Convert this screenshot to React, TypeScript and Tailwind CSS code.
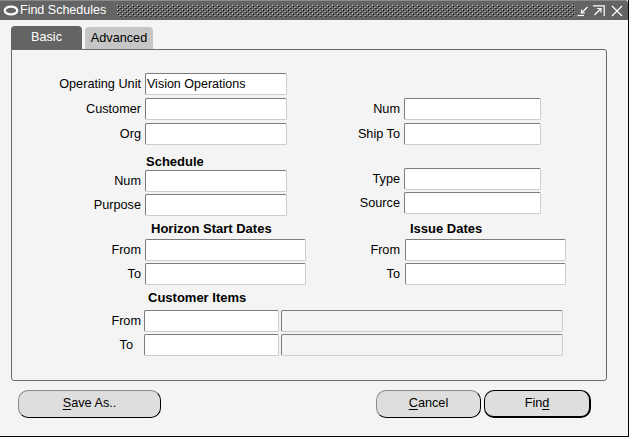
import type { ReactNode } from "react";

// Oracle Forms style "Find Schedules" dialog.

function Field({ w, value, disabled }: { w: string; value?: string; disabled?: boolean }) {
  return (
    <div
      className={`${w} flex h-[22px] items-center rounded-[2px] border border-t-[#7c7c7c] border-l-[#7c7c7c] border-b-[#cdcdcd] border-r-[#cdcdcd] px-[1px] text-[12.5px] leading-none whitespace-nowrap text-black ${
        disabled ? "bg-[#f4f4f4]" : "bg-white"
      }`}
    >
      {value}
    </div>
  );
}

function Label({ w, children, extra }: { w: string; children: ReactNode; extra?: string }) {
  return (
    <span className={`${w} shrink-0 text-right text-[12.7px] leading-none whitespace-nowrap text-black ${extra ?? ""}`}>{children}</span>
  );
}

function Row({ left, right, mt, rightShift }: { left?: ReactNode; right?: ReactNode; mt: string; rightShift?: boolean }) {
  return (
    <div className={`flex items-start ${mt}`}>
      <div className="flex w-[318px] shrink-0 items-center">{left}</div>
      {right ? <div className={`flex items-center ${rightShift ? "-mt-[2px]" : ""}`}>{right}</div> : null}
    </div>
  );
}

function Heading({ children, pl }: { children: ReactNode; pl: string }) {
  return <span className={`block ${pl} text-[13px] font-bold leading-[15px] whitespace-nowrap text-black`}>{children}</span>;
}

function TitleIcons() {
  return (
    <div className="flex items-center gap-[4px] text-white">
      <svg width="12" height="12" viewBox="0 0 12 12" fill="none" stroke="currentColor" strokeWidth="1.2">
        <line x1="0.5" y1="10.5" x2="7" y2="10.5" />
        <line x1="10.5" y1="2" x2="4.5" y2="8" />
        <polyline points="4.5,4.5 4.5,8 8,8" />
      </svg>
      <svg width="12" height="12" viewBox="0 0 12 12" fill="none" stroke="currentColor" strokeWidth="1.2">
        <polyline points="0,0.8 11.2,0.8 11.2,11" />
        <line x1="1.5" y1="10" x2="8" y2="3.5" />
        <polyline points="4,3.5 8,3.5 8,7.5" />
      </svg>
      <svg width="16" height="12" viewBox="0 0 16 12" fill="none" stroke="currentColor" strokeWidth="1.3">
        <line x1="3" y1="1" x2="13" y2="11" />
        <line x1="13" y1="1" x2="3" y2="11" />
      </svg>
    </div>
  );
}

export default function App() {
  return (
    <div className="h-[438px] w-[630px] bg-white font-['Liberation_Sans',Arial,sans-serif]">
      <div className="flex h-[437px] w-[629px] flex-col border-r border-b border-black bg-[#f4f4f4]">
        {/* Title bar */}
        <div className="flex h-[20px] shrink-0 items-center rounded-tr-[3px] border-t border-[#8a8a8a] bg-[#646464] pr-[3px]">
          <svg width="16" height="11" viewBox="0 0 16 11" className="ml-[3px] shrink-0">
            <ellipse cx="8" cy="5.5" rx="6.3" ry="3.9" fill="none" stroke="white" strokeWidth="2.2" />
          </svg>
          <span className="ml-[1px] shrink-0 whitespace-nowrap text-[12.5px] leading-none text-white">Find Schedules</span>
          <svg width="458" height="12" className="ml-[11px] shrink-0">
            <defs>
              <pattern id="dots" width="5" height="4" patternUnits="userSpaceOnUse">
                <rect x="0" y="0" width="1" height="1" fill="#d0d0d0" />
                <rect x="1" y="1" width="1" height="1" fill="#000" />
                <rect x="2.5" y="2" width="1" height="1" fill="#d0d0d0" />
                <rect x="3.5" y="3" width="1" height="1" fill="#000" />
              </pattern>
            </defs>
            <rect width="458" height="12" fill="url(#dots)" />
          </svg>
          <div className="ml-auto shrink-0">
            <TitleIcons />
          </div>
        </div>

        {/* Body */}
        <div className="flex flex-col pt-[6px]">
          {/* Tabs */}
          <div className="flex h-[23px] items-end gap-[3px] pl-[11px]">
            <div className="flex h-[23px] w-[71px] items-center justify-center rounded-t-[4px] bg-[#646464] text-[12.7px] leading-none text-white">
              Basic
            </div>
            <div className="flex h-[22px] w-[68px] items-center justify-center rounded-t-[4px] bg-[#c6c6c6] text-[12.7px] leading-none text-black">
              Advanced
            </div>
          </div>

          {/* Panel */}
          <div className="ml-[11px] flex h-[332px] w-[596px] flex-col rounded-b-[3px] rounded-tr-[3px] border border-[#6a6a6a]">
            <Row
              mt="mt-[23px]"
              left={
                <>
                  <Label w="w-[129px]">Operating Unit</Label>
                  <div className="ml-[4px]">
                    <Field w="w-[142px]" value="Vision Operations" />
                  </div>
                </>
              }
            />
            <Row
              mt="mt-[3px]"
              left={
                <>
                  <Label w="w-[129px]">Customer</Label>
                  <div className="ml-[4px]">
                    <Field w="w-[142px]" />
                  </div>
                </>
              }
              right={
                <>
                  <Label w="w-[70px]">Num</Label>
                  <div className="ml-[4px]">
                    <Field w="w-[137px]" />
                  </div>
                </>
              }
            />
            <Row
              mt="mt-[3px]"
              left={
                <>
                  <Label w="w-[129px]">Org</Label>
                  <div className="ml-[4px]">
                    <Field w="w-[142px]" />
                  </div>
                </>
              }
              right={
                <>
                  <Label w="w-[70px]">Ship To</Label>
                  <div className="ml-[4px]">
                    <Field w="w-[137px]" />
                  </div>
                </>
              }
            />

            <div className="mt-[9px] flex h-[15px]">
              <Heading pl="pl-[134px]">Schedule</Heading>
            </div>
            <Row
              mt="mt-[1px]"
              rightShift
              left={
                <>
                  <Label w="w-[129px]">Num</Label>
                  <div className="ml-[4px]">
                    <Field w="w-[142px]" />
                  </div>
                </>
              }
              right={
                <>
                  <Label w="w-[70px]">Type</Label>
                  <div className="ml-[4px]">
                    <Field w="w-[137px]" />
                  </div>
                </>
              }
            />
            <Row
              mt="mt-[2px]"
              rightShift
              left={
                <>
                  <Label w="w-[129px]">Purpose</Label>
                  <div className="ml-[4px]">
                    <Field w="w-[142px]" />
                  </div>
                </>
              }
              right={
                <>
                  <Label w="w-[70px]">Source</Label>
                  <div className="ml-[4px]">
                    <Field w="w-[137px]" />
                  </div>
                </>
              }
            />

            <div className="mt-[5px] flex h-[15px]">
              <div className="w-[318px] shrink-0">
                <Heading pl="pl-[139px]">Horizon Start Dates</Heading>
              </div>
              <Heading pl="pl-[80px]">Issue Dates</Heading>
            </div>
            <Row
              mt="mt-[3px]"
              left={
                <>
                  <Label w="w-[129px]">From</Label>
                  <div className="ml-[4px]">
                    <Field w="w-[161px]" />
                  </div>
                </>
              }
              right={
                <>
                  <Label w="w-[70px]">From</Label>
                  <div className="ml-[5px]">
                    <Field w="w-[161px]" />
                  </div>
                </>
              }
            />
            <Row
              mt="mt-[2px]"
              left={
                <>
                  <Label w="w-[129px]">To</Label>
                  <div className="ml-[4px]">
                    <Field w="w-[161px]" />
                  </div>
                </>
              }
              right={
                <>
                  <Label w="w-[70px]">To</Label>
                  <div className="ml-[5px]">
                    <Field w="w-[161px]" />
                  </div>
                </>
              }
            />

            <div className="mt-[5px] flex h-[15px]">
              <Heading pl="pl-[136px]">Customer Items</Heading>
            </div>
            <div className="mt-[5px] flex items-center">
              <Label w="w-[129px]">From</Label>
              <div className="ml-[3px] flex gap-[2px]">
                <Field w="w-[135px]" />
                <Field w="w-[282px]" disabled />
              </div>
            </div>
            <div className="mt-[2px] flex items-center">
              <Label w="w-[129px]" extra="pr-[8px]">
                To
              </Label>
              <div className="ml-[3px] flex gap-[2px]">
                <Field w="w-[135px]" />
                <Field w="w-[282px]" disabled />
              </div>
            </div>
          </div>

          {/* Buttons */}
          <div className="mt-[9px] flex h-[28px] items-stretch pl-[18px]">
            <button className="w-[143px] rounded-[10px] border border-t-[#8c8c8c] border-l-[#8c8c8c] border-b-black border-r-black bg-[#dedede] text-[12.7px] text-black">
              <span className="underline underline-offset-[2px]">S</span>ave As..
            </button>
            <div className="flex-1" />
            <button className="w-[105px] rounded-[10px] border border-t-[#8c8c8c] border-l-[#8c8c8c] border-b-black border-r-black bg-[#dedede] text-[12.7px] text-black">
              <span className="underline underline-offset-[2px]">C</span>ancel
            </button>
            <button className="ml-[3px] mr-[37px] w-[107px] rounded-[10px] border-2 border-black border-t-[1.5px] border-l-[1.5px] bg-[#dedede] text-[12.7px] text-black">
              Fin<span className="underline underline-offset-[2px]">d</span>
            </button>
          </div>
        </div>
      </div>
    </div>
  );
}
